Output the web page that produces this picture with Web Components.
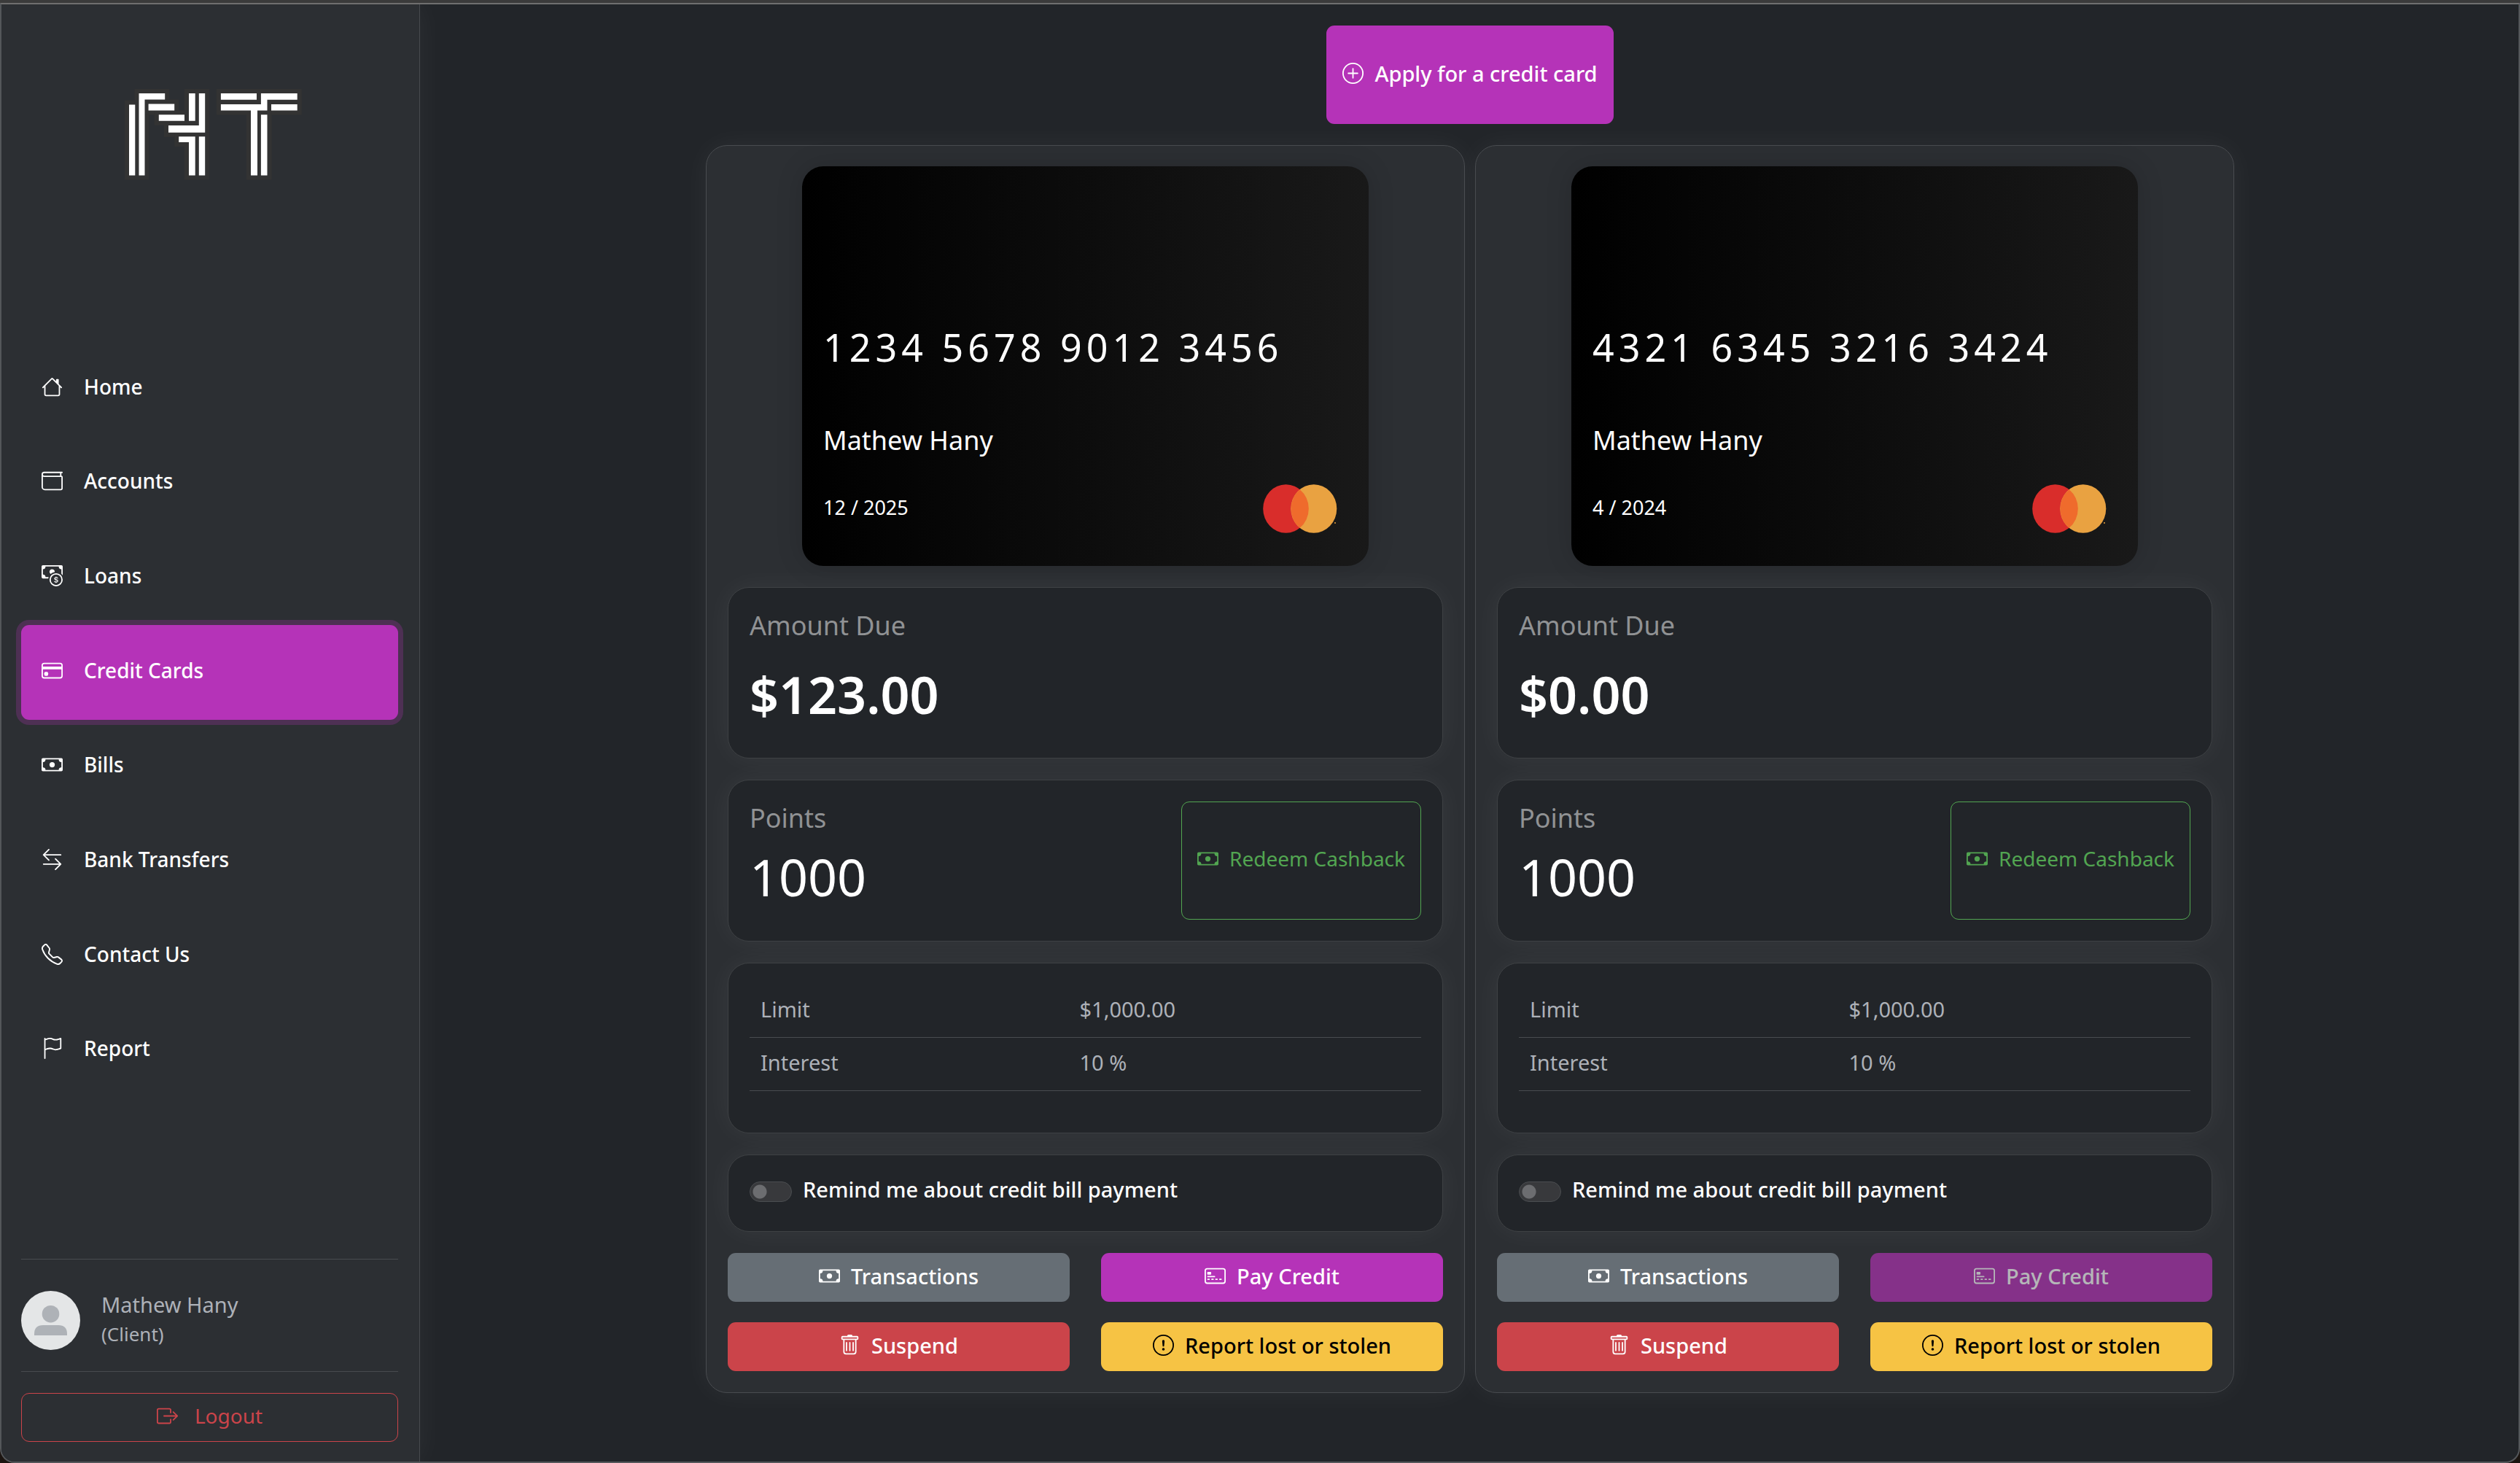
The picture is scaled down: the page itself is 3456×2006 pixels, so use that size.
<!DOCTYPE html>
<html lang="en">
<head>
<meta charset="utf-8">
<meta name="viewport" content="width=device-width, initial-scale=1">
<title>NT Bank – Credit Cards</title>
<style>
  :root {
    --bg: #222529;
    --surface: #2c2f33;
    --line: #484b4f;
    --purple: #b533b8;
    --red: #cb444a;
    --green: #52a551;
    --yellow: #f6c344;
    --gray: #666e75;
    --muted: #adb1b8;
    --glow: 0 0 40px rgba(255, 255, 255, .05);
  }
  * { box-sizing: border-box; }
  body {
    margin: 0;
    background: #1c1511;
    color: #fff;
    font: 400 29px/43px "Noto Sans", "Open Sans", sans-serif;
  }
</style>
</head>
<body>
<bank-window>
  <bank-sidebar slot="sidebar" user="Mathew Hany" role-name="(Client)">
    <nav-item icon="house">Home</nav-item>
    <nav-item icon="wallet">Accounts</nav-item>
    <nav-item icon="coin">Loans</nav-item>
    <nav-item icon="card" active>Credit Cards</nav-item>
    <nav-item icon="cash">Bills</nav-item>
    <nav-item icon="arrows">Bank Transfers</nav-item>
    <nav-item icon="phone">Contact Us</nav-item>
    <nav-item icon="flag">Report</nav-item>
  </bank-sidebar>
  <bank-button variant="primary" size="lg" icon="plus">Apply for a credit card</bank-button>
  <card-list>
    <credit-panel number="1234 5678 9012 3456" holder="Mathew Hany" expiry="12 / 2025"
      due="$123.00" points="1000" limit="$1,000.00" interest="10 %"></credit-panel>
    <credit-panel number="4321 6345 3216 3424" holder="Mathew Hany" expiry="4 / 2024"
      due="$0.00" points="1000" limit="$1,000.00" interest="10 %" paid></credit-panel>
  </card-list>
</bank-window>

<script>
const ICONS = {
  house: '<path d="M8.707 1.5a1 1 0 0 0-1.414 0L.646 8.146a.5.5 0 0 0 .708.708L2 8.207V13.5A1.5 1.5 0 0 0 3.5 15h9a1.5 1.5 0 0 0 1.5-1.5V8.207l.646.647a.5.5 0 0 0 .708-.708L13 5.793V2.5a.5.5 0 0 0-.5-.5h-1a.5.5 0 0 0-.5.5v1.293L8.707 1.5ZM13 7.207V13.5a.5.5 0 0 1-.5.5h-9a.5.5 0 0 1-.5-.5V7.207l5-5 5 5Z"/>',
  wallet: '<path d="M0 3a2 2 0 0 1 2-2h13.5a.5.5 0 0 1 0 1H15v2a1 1 0 0 1 1 1v8.5a1.5 1.5 0 0 1-1.5 1.5h-12A2.5 2.5 0 0 1 0 12.5V3zm1 1.732V12.5A1.5 1.5 0 0 0 2.5 14h12a.5.5 0 0 0 .5-.5V5H2a1.99 1.99 0 0 1-1-.268zM1 3a1 1 0 0 0 1 1h12V2H2a1 1 0 0 0-1 1z"/>',
  coin: '<path fill-rule="evenodd" d="M11 15a4 4 0 1 0 0-8 4 4 0 0 0 0 8zm5-4a5 5 0 1 1-10 0 5 5 0 0 1 10 0z"/><path d="M9.438 11.944c.047.596.518 1.06 1.363 1.116v.44h.375v-.443c.875-.061 1.386-.529 1.386-1.207 0-.618-.39-.936-1.09-1.1l-.296-.07v-1.2c.376.043.614.248.671.532h.658c-.047-.575-.54-1.024-1.329-1.073V8.5h-.375v.45c-.747.073-1.255.522-1.255 1.158 0 .562.378.92 1.007 1.066l.248.061v1.272c-.384-.058-.639-.27-.696-.563h-.668zm1.36-1.354c-.369-.085-.569-.26-.569-.522 0-.294.216-.514.572-.578v1.1h-.003zm.432.746c.449.104.655.272.655.569 0 .339-.257.571-.709.614v-1.195l.054.012z"/><path d="M1 0a1 1 0 0 0-1 1v8a1 1 0 0 0 1 1h4.083c.058-.344.145-.678.258-1H3a2 2 0 0 0-2-2V3a2 2 0 0 0 2-2h10a2 2 0 0 0 2 2v3.528c.38.34.717.728 1 1.154V1a1 1 0 0 0-1-1H1z"/><path d="M9.998 5.083 10 5a2 2 0 1 0-3.132 1.65 5.982 5.982 0 0 1 3.13-1.567z"/>',
  card: '<path d="M0 4a2 2 0 0 1 2-2h12a2 2 0 0 1 2 2v8a2 2 0 0 1-2 2H2a2 2 0 0 1-2-2V4zm2-1a1 1 0 0 0-1 1v1h14V4a1 1 0 0 0-1-1H2zm13 4H1v5a1 1 0 0 0 1 1h12a1 1 0 0 0 1-1V7z"/><path d="M2 10a1 1 0 0 1 1-1h1a1 1 0 0 1 1 1v1a1 1 0 0 1-1 1H3a1 1 0 0 1-1-1v-1z"/>',
  cash: '<path d="M8 10a2 2 0 1 0 0-4 2 2 0 0 0 0 4z"/><path d="M0 4a1 1 0 0 1 1-1h14a1 1 0 0 1 1 1v8a1 1 0 0 1-1 1H1a1 1 0 0 1-1-1V4zm3 0a2 2 0 0 1-2 2v4a2 2 0 0 1 2 2h10a2 2 0 0 1 2-2V6a2 2 0 0 1-2-2H3z"/>',
  arrows: '<path fill-rule="evenodd" d="M1 11.5a.5.5 0 0 0 .5.5h11.793l-3.147 3.146a.5.5 0 0 0 .708.708l4-4a.5.5 0 0 0 0-.708l-4-4a.5.5 0 0 0-.708.708L13.293 11H1.5a.5.5 0 0 0-.5.5zm14-7a.5.5 0 0 1-.5.5H2.707l3.147 3.146a.5.5 0 1 1-.708.708l-4-4a.5.5 0 0 1 0-.708l4-4a.5.5 0 1 1 .708.708L2.707 4H14.5a.5.5 0 0 1 .5.5z"/>',
  phone: '<path d="M3.654 1.328a.678.678 0 0 0-1.015-.063L1.605 2.3c-.483.484-.661 1.169-.45 1.77a17.568 17.568 0 0 0 4.168 6.608 17.569 17.569 0 0 0 6.608 4.168c.601.211 1.286.033 1.77-.45l1.034-1.034a.678.678 0 0 0-.063-1.015l-2.307-1.794a.678.678 0 0 0-.58-.122l-2.19.547a1.745 1.745 0 0 1-1.657-.459L5.482 8.062a1.745 1.745 0 0 1-.46-1.657l.548-2.19a.678.678 0 0 0-.122-.58L3.654 1.328zM1.884.511a1.745 1.745 0 0 1 2.612.163L6.29 2.98c.329.423.445.974.315 1.494l-.547 2.19a.678.678 0 0 0 .178.643l2.457 2.457a.678.678 0 0 0 .644.178l2.189-.547a1.745 1.745 0 0 1 1.494.315l2.306 1.794c.829.645.905 1.87.163 2.611l-1.034 1.034c-.74.74-1.846 1.065-2.877.702a18.634 18.634 0 0 1-7.01-4.42 18.634 18.634 0 0 1-4.42-7.009c-.362-1.03-.037-2.137.703-2.877L1.885.511z"/>',
  flag: '<path d="M14.778.085A.5.5 0 0 1 15 .5V8a.5.5 0 0 1-.314.464L14.5 8l.186.464-.003.001-.006.003-.023.009a12.435 12.435 0 0 1-.397.15c-.264.095-.631.223-1.047.35-.816.252-1.879.523-2.71.523-.847 0-1.548-.28-2.158-.525l-.028-.01C7.68 8.71 7.14 8.5 6.5 8.5c-.7 0-1.638.23-2.437.477A19.626 19.626 0 0 0 3 9.342V15.5a.5.5 0 0 1-1 0V.5a.5.5 0 0 1 1 0v.282c.226-.079.496-.17.79-.26C4.606.272 5.67 0 6.5 0c.84 0 1.524.277 2.121.519l.043.018C9.286.788 9.828 1 10.5 1c.7 0 1.638-.23 2.437-.477a19.587 19.587 0 0 0 1.349-.476l.019-.007.004-.002h.001M14 1.221c-.22.078-.48.167-.766.255-.81.252-1.872.523-2.734.523-.886 0-1.592-.286-2.203-.534l-.008-.003C7.662 1.21 7.139 1 6.5 1c-.669 0-1.606.229-2.415.478A21.294 21.294 0 0 0 3 1.845v6.433c.22-.078.48-.167.766-.255C4.576 7.77 5.638 7.5 6.5 7.5c.847 0 1.548.28 2.158.525l.028.01C9.32 8.29 9.86 8.5 10.5 8.5c.668 0 1.606-.229 2.415-.478A21.317 21.317 0 0 0 14 7.655V1.222z"/>',
  plus: '<path d="M8 15A7 7 0 1 1 8 1a7 7 0 0 1 0 14zm0 1A8 8 0 1 0 8 0a8 8 0 0 0 0 16z"/><path d="M8 4a.5.5 0 0 1 .5.5v3h3a.5.5 0 0 1 0 1h-3v3a.5.5 0 0 1-1 0v-3h-3a.5.5 0 0 1 0-1h3v-3A.5.5 0 0 1 8 4z"/>',
  pay: '<path d="M14 3a1 1 0 0 1 1 1v8a1 1 0 0 1-1 1H2a1 1 0 0 1-1-1V4a1 1 0 0 1 1-1h12zM2 2a2 2 0 0 0-2 2v8a2 2 0 0 0 2 2h12a2 2 0 0 0 2-2V4a2 2 0 0 0-2-2H2z"/><path d="M2 5.5a.5.5 0 0 1 .5-.5h2a.5.5 0 0 1 .5.5v1a.5.5 0 0 1-.5.5h-2a.5.5 0 0 1-.5-.5v-1zm0 3a.5.5 0 0 1 .5-.5h5a.5.5 0 0 1 0 1h-5a.5.5 0 0 1-.5-.5zm0 2a.5.5 0 0 1 .5-.5h1a.5.5 0 0 1 0 1h-1a.5.5 0 0 1-.5-.5zm3 0a.5.5 0 0 1 .5-.5h1a.5.5 0 0 1 0 1h-1a.5.5 0 0 1-.5-.5zm3 0a.5.5 0 0 1 .5-.5h1a.5.5 0 0 1 0 1h-1a.5.5 0 0 1-.5-.5zm3 0a.5.5 0 0 1 .5-.5h1a.5.5 0 0 1 0 1h-1a.5.5 0 0 1-.5-.5z"/>',
  trash: '<path d="M5.5 5.5A.5.5 0 0 1 6 6v6a.5.5 0 0 1-1 0V6a.5.5 0 0 1 .5-.5zm2.5 0a.5.5 0 0 1 .5.5v6a.5.5 0 0 1-1 0V6a.5.5 0 0 1 .5-.5zm3 .5a.5.5 0 0 0-1 0v6a.5.5 0 0 0 1 0V6z"/><path fill-rule="evenodd" d="M14.5 3a1 1 0 0 1-1 1H13v9a2 2 0 0 1-2 2H5a2 2 0 0 1-2-2V4h-.5a1 1 0 0 1-1-1V2a1 1 0 0 1 1-1H6a1 1 0 0 1 1-1h2a1 1 0 0 1 1 1h3.5a1 1 0 0 1 1 1v1zM4.118 4 4 4.059V13a1 1 0 0 0 1 1h6a1 1 0 0 0 1-1V4.059L11.882 4H4.118zM2.5 3V2h11v1h-11z"/>',
  alert: '<path d="M8 15A7 7 0 1 1 8 1a7 7 0 0 1 0 14zm0 1A8 8 0 1 0 8 0a8 8 0 0 0 0 16z"/><path d="M7.002 11a1 1 0 1 1 2 0 1 1 0 0 1-2 0zM7.1 4.995a.905.905 0 1 1 1.8 0l-.35 3.507a.552.552 0 0 1-1.1 0L7.1 4.995z"/>',
  exit: '<path fill-rule="evenodd" d="M10 12.5a.5.5 0 0 1-.5.5h-8a.5.5 0 0 1-.5-.5v-9a.5.5 0 0 1 .5-.5h8a.5.5 0 0 1 .5.5v2a.5.5 0 0 0 1 0v-2A1.5 1.5 0 0 0 9.5 2h-8A1.5 1.5 0 0 0 0 3.5v9A1.5 1.5 0 0 0 1.5 14h8a1.5 1.5 0 0 0 1.5-1.5v-2a.5.5 0 0 0-1 0v2z"/><path fill-rule="evenodd" d="M15.854 8.354a.5.5 0 0 0 0-.708l-3-3a.5.5 0 0 0-.708.708L14.293 7.5H5.5a.5.5 0 0 0 0 1h8.793l-2.147 2.146a.5.5 0 0 0 .708.708l3-3z"/>'
};

const BASE = '*{box-sizing:border-box;margin:0}';

class BaseElement extends HTMLElement {
  connectedCallback() {
    if (this.shadowRoot) return;
    this.attachShadow({ mode: 'open' }).innerHTML = `<style>${BASE}${this.css()}</style>${this.html()}`;
  }
  attr(name) { return this.getAttribute(name) || ''; }
}

customElements.define('bank-icon', class extends BaseElement {
  css() { return ':host{display:block;flex:none;width:29px;height:29px}svg{display:block;width:100%;height:100%}'; }
  html() { return `<svg viewBox="0 0 16 16" fill="currentColor" aria-hidden="true">${ICONS[this.attr('name')]}</svg>`; }
});

customElements.define('bank-button', class extends BaseElement {
  css() { return `
    :host{display:flex}
    button{flex:1;display:flex;align-items:center;justify-content:center;gap:15px;
      min-height:67px;padding:0 21px 5px;border:1px solid transparent;border-radius:11px;
      font:inherit;font-weight:500;color:#fff;background:none;white-space:nowrap;cursor:pointer}
    :host([size=lg]) button{min-height:135px}
    :host([size=md]) button{min-height:162px}
    :host([wide]) button{gap:23px}
    :host([variant=primary]) button{background:var(--purple)}
    :host([variant=secondary]) button{background:var(--gray)}
    :host([variant=danger]) button{background:var(--red)}
    :host([variant=warning]) button{background:var(--yellow);color:#000}
    :host([variant^=outline]) button{font-size:28px;font-weight:400}
    :host([variant=outline-success]) button{border-color:var(--green);color:var(--green)}
    :host([variant=outline-danger]) button{border-color:var(--red);color:var(--red)}
    button:disabled{opacity:.65;cursor:default}`; }
  html() { return `<button type="button"${this.hasAttribute('disabled') ? ' disabled' : ''}>
    <bank-icon name="${this.attr('icon')}"></bank-icon><span><slot></slot></span></button>`; }
});

customElements.define('nav-item', class extends BaseElement {
  css() { return `
    :host{display:block}
    a{display:flex;align-items:center;gap:29px;height:100%;padding:0 28px 5px;
      border-radius:11px;color:#fff;font-size:28px;font-weight:500;text-decoration:none}
    :host([active]) a{background:var(--purple);box-shadow:0 0 0 7px rgba(181,51,184,.25)}`; }
  html() { return `<a href="#"><bank-icon name="${this.attr('icon')}"></bank-icon><span><slot></slot></span></a>`; }
});

/* Striped monogram of the bank, with a dark outline round the strips. */
customElements.define('bank-logo', class extends BaseElement {
  css() { return ':host{display:block}svg{display:block;width:252px;height:126px}'; }
  html() {
    const strips = `
      <path d="M177 143.5h8.3v97H177z"/>
      <path d="M190.5 128h35.7v8.5h-27.7v104h-8z"/>
      <path d="M203.6 142.5h35.6v9h-35.6z"/>
      <path d="M217.8 157.3H253v8.5h-35.2z"/>
      <path d="M259 128h8.7v37.8H259z"/>
      <path d="M272.8 128h8.4v53.7H231V172h41.8z"/>
      <path d="M245.2 187.3h22.5v53.2H259v-45.5h-13.8z"/>
      <path d="M272.8 187.3h8.4v53.2h-8.4z"/>
      <path d="M302.9 128H352v8.8h-49.1z"/>
      <path d="M357.9 128h49.8v8.8h-41.2v14.8H353v88.9h-9v-88.9h-41.1V143h55z"/>
      <path d="M372 143h35.7v8.6H372z"/>
      <path d="M357.9 157.3h8.6v83.2h-8.6z"/>`;
    return `<svg viewBox="162 122 252 126" role="img" aria-label="Bank logo">
      <g fill="#333" stroke="#333" stroke-width="12">${strips}</g>
      <g fill="#fff">${strips}</g></svg>`;
  }
});

customElements.define('bank-sidebar', class extends BaseElement {
  css() { return `
    :host{position:relative;z-index:1;display:flex;flex-direction:column;flex:none;width:574px;
      padding:0 29px 27px 27px;background:var(--surface);border-right:1px solid var(--line);
      box-shadow:var(--glow)}
    header{display:flex;justify-content:center;padding:116px 0 220px}
    nav{display:grid;grid-auto-rows:1fr;height:1037px}
    footer{margin-top:auto}
    .user{display:flex;align-items:center;gap:29px;padding:40px 0 26px;color:var(--muted);
      border:solid var(--line);border-width:1px 0;margin-bottom:29px}
    .user svg{width:81px;height:81px;flex:none}
    .who{padding-bottom:5px}
    small{display:block;font-size:26px;line-height:39px}`; }
  html() { return `
    <header><bank-logo></bank-logo></header>
    <nav><slot></slot></nav>
    <footer>
      <div class="user">
        <svg viewBox="0 0 81 81" aria-hidden="true"><circle cx="40.5" cy="40.5" r="40.5" fill="#e4e6e7"/>
          <circle cx="40.5" cy="31.7" r="11.8" fill="#aeb2b7"/>
          <path d="M18 61V59q0-12 12-12h21q12 0 12 12v2z" fill="#aeb2b7"/></svg>
        <div class="who"><p>${this.attr('user')}</p><small>${this.attr('role-name')}</small></div>
      </div>
      <bank-button variant="outline-danger" icon="exit" wide>Logout</bank-button>
    </footer>`; }
});

customElements.define('card-face', class extends BaseElement {
  css() { return `
    :host{display:flex;flex-direction:column;justify-content:flex-end;width:100%;max-width:777px;
      height:548px;padding:0 43px 45px 29px;border-radius:29px;
      background:linear-gradient(to right,#000,#191919);box-shadow:0 0 36px rgba(0,0,0,.15)}
    .number{font-size:52px;line-height:60px;letter-spacing:6px;white-space:nowrap;margin-bottom:76px}
    .holder{font-size:36px;margin-bottom:39px}
    .row{display:flex;justify-content:space-between;align-items:center}
    .expiry{font-size:27px;padding-bottom:5px}
    svg{display:block;width:102px;height:67px}`; }
  html() { return `
    <p class="number">${this.attr('number')}</p>
    <p class="holder">${this.attr('holder')}</p>
    <div class="row"><p class="expiry">${this.attr('expiry')}</p>
      <svg viewBox="0 0 102 67" aria-hidden="true">
        <ellipse cx="31.5" cy="33.5" rx="31.3" ry="33.3" fill="#d92d2b"/>
        <ellipse cx="69.8" cy="33.5" rx="31.5" ry="33.3" fill="#e9a241"/>
        <path d="M50.7 7.2a31.3 33.3 0 0 1 0 52.6a31.5 33.3 0 0 1 0-52.6z" fill="#ef6b2c"/>
        <circle cx="99" cy="53" r="1" fill="#e9a241"/>
      </svg></div>`; }
});

customElements.define('info-box', class extends BaseElement {
  css() { return `:host{display:block;padding:29px;border:1px solid #3e4144;border-radius:29px;
    background:var(--bg);box-shadow:var(--glow)}`; }
  html() { return '<slot></slot>'; }
});

customElements.define('card-list', class extends BaseElement {
  css() { return ':host{display:grid;grid-template-columns:1fr 1fr;gap:14px;width:100%;max-width:2096px}'; }
  html() { return '<slot></slot>'; }
});

customElements.define('credit-panel', class extends BaseElement {
  css() { return `
    :host{display:flex;flex-direction:column;gap:29px;padding:28px 29px 29px;background:var(--surface);
      border:1px solid var(--line);border-radius:29px;box-shadow:var(--glow)}
    card-face{align-self:center}
    h2{font-size:36px;line-height:46px;font-weight:400;color:#909294;margin-bottom:28px}
    .amount{font-size:70px;line-height:86px;margin-bottom:15px;font-weight:600}
    .points{display:flex;justify-content:space-between}
    .points h2{margin-bottom:14px}
    .points .amount{font-weight:400;margin-bottom:0}
    table{width:100%;table-layout:fixed;border-collapse:separate;border-spacing:0;
      color:var(--muted);margin-bottom:28px}
    th,td{height:73px;padding:12px 15px 17px;text-align:left;font-weight:400;line-height:43px;
      border-bottom:1px solid var(--line)}
    th{width:47.5%}
    .remind{display:flex;align-items:flex-start;gap:15px;height:46px}
    label{line-height:36px;font-weight:500}
    input{appearance:none;flex:none;width:58px;height:28px;margin:7px 0 0;border:1px solid #4a4d50;
      border-radius:14px;background:radial-gradient(circle 10px at 13px 50%,#6c6d70 9px,transparent 10px) #38393c}
    .actions{display:grid;grid-template-columns:1fr 1fr;gap:28px 43px}`; }
  html() { return `
    <card-face number="${this.attr('number')}" holder="${this.attr('holder')}" expiry="${this.attr('expiry')}"></card-face>
    <info-box><h2>Amount Due</h2><p class="amount">${this.attr('due')}</p></info-box>
    <info-box><div class="points">
      <div><h2>Points</h2><p class="amount">${this.attr('points')}</p></div>
      <bank-button variant="outline-success" size="md" icon="cash">Redeem Cashback</bank-button>
    </div></info-box>
    <info-box><table>
      <tr><th scope="row">Limit</th><td>${this.attr('limit')}</td></tr>
      <tr><th scope="row">Interest</th><td>${this.attr('interest')}</td></tr>
    </table></info-box>
    <info-box><div class="remind"><input type="checkbox" role="switch" id="remind">
      <label for="remind">Remind me about credit bill payment</label></div></info-box>
    <div class="actions">
      <bank-button variant="secondary" icon="cash">Transactions</bank-button>
      <bank-button variant="primary" icon="pay"${this.hasAttribute('paid') ? ' disabled' : ''}>Pay Credit</bank-button>
      <bank-button variant="danger" icon="trash">Suspend</bank-button>
      <bank-button variant="warning" icon="alert">Report lost or stolen</bank-button>
    </div>`; }
});

customElements.define('bank-window', class extends BaseElement {
  css() { return `
    :host{display:flex;flex-direction:column;min-height:100vh}
    .chrome{height:4px;background:#3b3b3b}
    .frame{flex:1;display:flex;border:2px solid #54575a;border-top-color:#6f6f6f;
      border-radius:0 0 20px 20px;background:var(--bg);overflow:hidden}
    main{flex:1;min-width:0;display:flex;flex-direction:column;align-items:center;gap:29px;
      padding:29px 27px 29px 29px}`; }
  html() { return `<div class="chrome"></div><div class="frame">
    <slot name="sidebar"></slot><main><slot></slot></main></div>`; }
});
</script>
</body>
</html>
